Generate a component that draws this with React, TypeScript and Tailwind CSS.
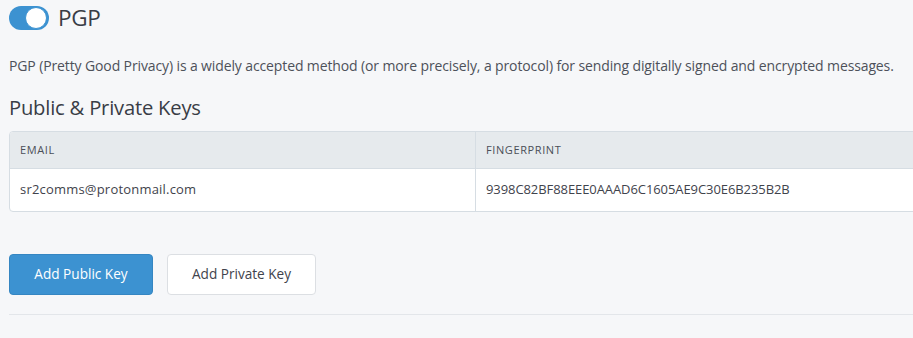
import React from "react";

export default function App() {
  return (
    <div
      className="w-[913px] h-[338px] overflow-hidden bg-[#f6f7f9] text-[#4b4f58]"
      style={{ fontFamily: '"Open Sans", "Noto Sans", sans-serif' }}
    >
      <div className="pl-[9px] w-[960px]">
        <div className="flex items-center h-[36px]">
          <div className="relative w-[40px] h-[24px] rounded-full bg-[#3c92d1]">
            <div className="absolute right-[2px] top-[1px] w-[22px] h-[22px] rounded-full bg-white border border-[#3c92d1]" />
          </div>
          <span className="ml-[9px] text-[22.5px] leading-none text-[#393d46] tracking-[-0.3px]">PGP</span>
        </div>
        <p className="mt-[20px] text-[14px] leading-[20px] text-[#4d515a] tracking-[-0.12px]">
          PGP (Pretty Good Privacy) is a widely accepted method (or more precisely, a protocol) for sending digitally signed and encrypted messages.
        </p>
        <h2 className="mt-[18px] text-[20.2px] leading-[26px] text-[#393d46] tracking-[-0.2px]">Public &amp; Private Keys</h2>
        <div className="mt-[11px] w-[930px] rounded-[4px] border border-[#d6dde3] bg-white overflow-hidden">
          <div className="flex h-[37px] bg-[#e6eaed] border-b border-[#d6dde3] items-center text-[11px] tracking-[0.6px] text-[#4b4f58]">
            <div className="w-[466px] pl-[10px] border-r border-[#d6dde3] h-full flex items-center">EMAIL</div>
            <div className="pl-[10px]">FINGERPRINT</div>
          </div>
          <div className="flex h-[42px] items-center text-[13px] text-[#3f434c]">
            <div className="w-[466px] pl-[10px] border-r border-[#d6dde3] h-full flex items-center tracking-[0.2px]">sr2comms@protonmail.com</div>
            <div className="pl-[10px] tracking-[-0.08px]">9398C82BF88EEE0AAAD6C1605AE9C30E6B235B2B</div>
          </div>
        </div>
        <div className="mt-[42px] flex gap-[14px]">
          <button className="w-[144px] h-[41px] rounded-[4px] bg-[#3c92d1] border border-[#3586c2] text-white text-[13.6px]">
            Add Public Key
          </button>
          <button className="w-[149px] h-[41px] rounded-[4px] bg-white border border-[#dcdfe3] text-[#3f434c] text-[13.6px]">
            Add Private Key
          </button>
        </div>
        <div className="mt-[19px] h-px bg-[#e3e6ea] w-[920px]" />
      </div>
    </div>
  );
}
